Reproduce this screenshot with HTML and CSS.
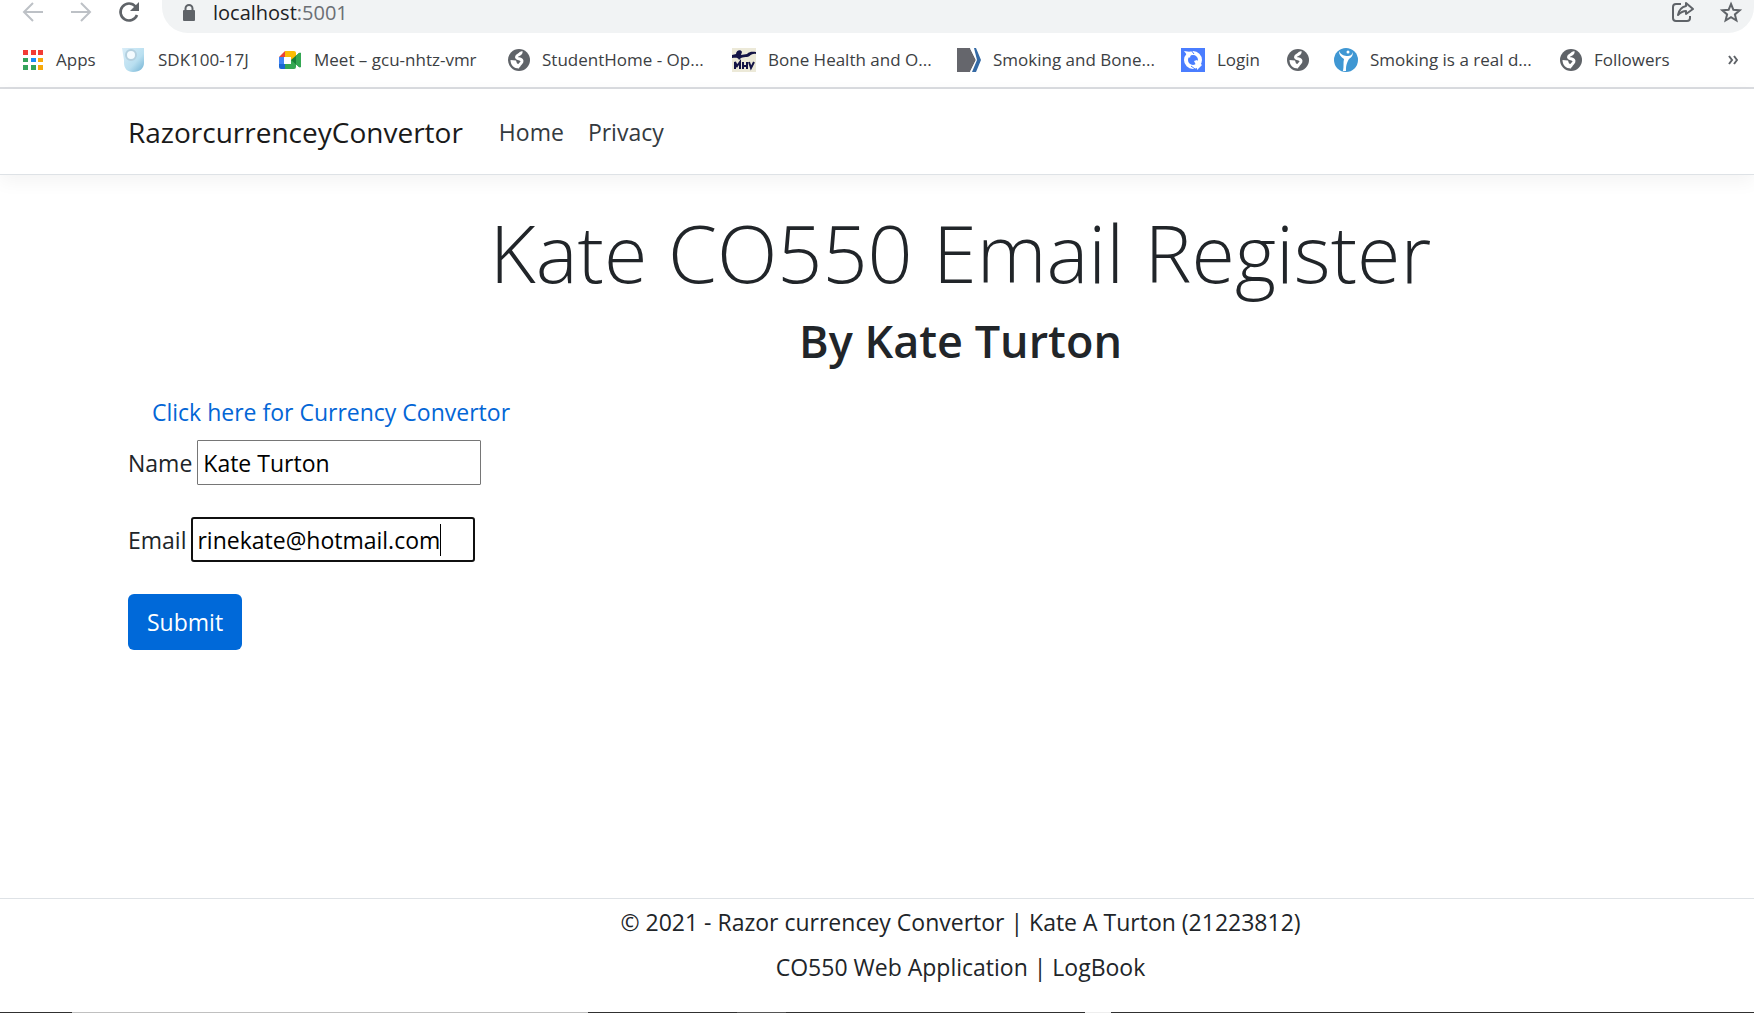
FILE: index.html
```html
<!DOCTYPE html>
<html lang="en">
<head>
<meta charset="utf-8">
<title>RazorcurrenceyConvertor</title>
<link rel="stylesheet" href="styles.css">
</head>
<body>
<svg class="symbols" aria-hidden="true">
  <symbol id="globe" viewBox="0 0 22 22">
    <circle cx="11" cy="11" r="11" fill="#5f6368"/>
    <path d="M13 2.500C14 6 8.500 5 8.500 8C8.500 10.500 13.500 9 14 12C14.300 14.500 11 14.500 10.500 18" fill="none" stroke="#fff" stroke-width="3"/>
    <path d="M2.500 11l5.500.5 1 3 3 1-1 4C6 19.500 2.500 16 2.500 11z" fill="#fff"/>
  </symbol>
</svg>

<div class="browser">
  <div class="toolbar">
    <nav class="controls">
      <button type="button" aria-label="Back"><svg width="24" height="24" viewBox="0 0 24 24" fill="none" stroke="#bdc1c6" stroke-width="2"><path d="M22 12H4M12 3l-9 9 9 9"/></svg></button>
      <button type="button" aria-label="Forward"><svg width="24" height="24" viewBox="0 0 24 24" fill="none" stroke="#bdc1c6" stroke-width="2"><path d="M2 12h18M12 3l9 9-9 9"/></svg></button>
      <button type="button" aria-label="Reload"><svg width="24" height="24" viewBox="0 0 24 24"><path d="M18.500 6.500A8.500 8.500 0 1 0 20 15" fill="none" stroke="#5f6368" stroke-width="2.600"/><path d="M22 2v9h-9z" fill="#5f6368"/></svg></button>
    </nav>
    <div class="omnibox">
      <svg class="lock" width="14" height="18" viewBox="0 0 14 18"><path d="M3.500 7V4.500a3.500 3.500 0 0 1 7 0V7" fill="none" stroke="#5f6368" stroke-width="2"/><rect x="1" y="6" width="12" height="11" rx="1" fill="#5f6368"/></svg>
      <span class="url">localhost<span class="port">:5001</span></span>
      <button type="button" aria-label="Share"><svg width="24" height="24" viewBox="0 0 24 24" fill="none" stroke="#5f6368" stroke-width="2" stroke-linejoin="round"><path d="M10 4H5a3 3 0 0 0-3 3v11a3 3 0 0 0 3 3h11a3 3 0 0 0 3-3v-2"/><path d="M15 3l7 6-7 5v-3c-3 0-5 1-8 4 1-6 4-8 8-9z"/></svg></button>
      <button type="button" aria-label="Bookmark this page"><svg width="24" height="24" viewBox="0 0 24 24" fill="none" stroke="#5f6368" stroke-width="2"><path d="M12 4l2.400 5.800 6.300.5-4.800 4.100 1.500 6.100L12 17.200l-5.400 3.300 1.500-6.100-4.800-4.100 6.300-.5z"/></svg></button>
    </div>
  </div>

  <nav class="bookmarks" aria-label="Bookmarks">
    <a href="#"><svg width="22" height="22" viewBox="0 0 22 22"><path d="M1 1h5v5H1zM9 1h5v5H9zM16 1h5v5h-5z" fill="#f23c35"/><path d="M1 9h5v4H1zM1 16h5v5H1zM9 16h5v5H9z" fill="#34a35a"/><path d="M9 9h5v4H9z" fill="#1a8cf5"/><path d="M16 9h5v4h-5zM16 16h5v5h-5z" fill="#f7a90a"/></svg>Apps</a>
    <a href="#"><svg width="24" height="24" viewBox="0 0 24 24"><defs><linearGradient id="ice" x2="1" y2="1"><stop stop-color="#d9edf8"/><stop offset=".6" stop-color="#b9dff0"/><stop offset="1" stop-color="#6fb0d2"/></linearGradient></defs><path d="M0 0h22v15c0 5-4 9-11 9-6 0-9-4-9-9V12z" fill="url(#ice)"/><circle cx="9" cy="7" r="5" fill="#f4fbff" stroke="#b4d0df" stroke-width="2"/></svg>SDK100-17J</a>
    <a href="#"><svg width="24" height="24" viewBox="0 0 24 24"><path d="M1 9l6-6v6z" fill="#ea4335"/><path d="M7 3h9q2 0 2 2v4l-5 3V9H7z" fill="#fbbc04"/><path d="M1 9h5v7H1z" fill="#4285f4"/><path d="M1 16h6v5H3q-2 0-2-2z" fill="#1967d2"/><path d="M7 16h6v-4l5-3v10q0 2-2 2H7z" fill="#34a853"/><path d="M13 12l8-7q2-1 2 1v12q0 2-2 1z" fill="#188038"/><path d="M18 8l3-3q2-1 2 1v12q0 2-2 1l-3-3z" fill="#34a853"/></svg>Meet – gcu-nhtz-vmr</a>
    <a href="#"><svg width="22" height="22"><use href="#globe"/></svg>StudentHome - Op...</a>
    <a href="#"><svg width="24" height="24" viewBox="0 0 24 24"><path d="M0 0h24v24H0z" fill="#ece9d8"/><path d="M0 7l4-1c0-4 5-5 6-2l-1 3 6-1c3-3 6-2 9-2v2c-5-1-6 3-9 3-2 0-4 0-6 1l-2 2c-1-3-4-2-7-2z" fill="#141446"/><path d="M3 21v-7l2 4 3-4v7M11 14v7M15 14v7M11 18h4M17 14l2 6 3-6" fill="none" stroke="#141446" stroke-width="2"/></svg>Bone Health and O...</a>
    <a href="#"><svg width="24" height="24" viewBox="0 0 24 24"><path d="M0 0h13l6 12-6 12H0z" fill="#65666c"/><path d="M14 0l6 12-6 12" fill="none" stroke="#fff" stroke-width="2"/><path d="M17 0h2l5 12-5 12h-4l5-12z" fill="#356aa4"/></svg>Smoking and Bone...</a>
    <a href="#"><svg width="24" height="24" viewBox="0 0 24 24"><path d="M0 0h24v24H0z" fill="#4a7dff"/><circle cx="12" cy="12" r="7" fill="none" stroke="#fff" stroke-width="4"/><path d="M13 13l3-1 5 5-5 5v-3z" fill="#fff"/><path d="M3 3l7 1-1 6-3-3z" fill="#fff"/><path d="M10 2l3 4M10 18l4 3" stroke="#4a7dff"/></svg>Login</a>
    <a href="#" aria-label="Website"><svg width="22" height="22"><use href="#globe"/></svg></a>
    <a href="#"><svg width="24" height="24" viewBox="0 0 24 24"><circle cx="12" cy="12" r="12" fill="#3f97d3"/><circle cx="14" cy="4" r="1.500" fill="#fff"/><path d="M5 3c0 4 2 6 5 8-1 4 0 7-1 12h3c0-4 0-7 3-12 3-2 4-4 4-7-1 3-3 4-5 4-4 0-7-1-9-5z" fill="#fff"/></svg>Smoking is a real d...</a>
    <a href="#"><svg width="22" height="22"><use href="#globe"/></svg>Followers</a>
    <button type="button" aria-label="More bookmarks"><svg width="10" height="10" viewBox="0 0 10 10" fill="none" stroke="#5f6368" stroke-width="2"><path d="M1 1l3 4-3 4M6 1l3 4-3 4"/></svg></button>
  </nav>
</div>

<header class="site-header">
  <nav class="container site-nav">
    <a class="brand" href="#">RazorcurrenceyConvertor</a>
    <a class="nav-link" href="#">Home</a>
    <a class="nav-link" href="#">Privacy</a>
  </nav>
</header>

<main class="container">
  <h1 class="title">Kate CO550 Email Register</h1>
  <h2 class="subtitle">By Kate Turton</h2>
  <a class="convertor-link" href="#">Click here for Currency Convertor</a>
  <form>
    <div class="field">
      <label for="name">Name</label>
      <input id="name" type="text" value="Kate Turton">
    </div>
    <div class="field">
      <label for="email">Email</label>
      <span class="active-input"><input id="email" type="text" value="rinekate@hotmail.com"><span class="caret"></span></span>
    </div>
    <button class="submit" type="submit">Submit</button>
  </form>
</main>

<footer class="site-footer">
  <div class="container">
    <p>© 2021 - Razor currencey Convertor | Kate A Turton (21223812)</p>
    <p>CO550 Web Application | LogBook</p>
  </div>
</footer>
<div class="taskbar-edge"></div>
</body>
</html>
```
FILE: styles.css
```css
* {
  box-sizing: border-box;
}

body {
  margin: 0;
  min-height: 100vh;
  display: flex;
  flex-direction: column;
  overflow-x: hidden;
  background: #fff;
  color: #212529;
  font-family: "Open Sans", "Noto Sans", sans-serif;
  font-size: 23px;
  line-height: 36px;
}

a {
  color: inherit;
  text-decoration: none;
}

button {
  border: 0;
  padding: 0;
  background: none;
  font: inherit;
}

svg {
  display: block;
  flex: none;
}

.symbols {
  position: absolute;
  width: 0;
  height: 0;
}

/* Browser chrome */
.browser {
  border-bottom: 2px solid #dadce0;
}

.toolbar {
  display: flex;
  height: 33px;
}

.controls {
  display: flex;
  gap: 24px;
  padding-left: 21px;
  width: 162px;
}

.controls button,
.omnibox button {
  height: 24px;
}

.omnibox {
  flex: 1;
  display: flex;
  align-items: flex-start;
  gap: 24px;
  padding: 0 11px 0 20px;
  border-radius: 0 0 26px 26px;
  background: #f1f3f4;
}

.lock {
  margin-top: 4px;
}

.url {
  flex: 1;
  margin-left: -7px;
  color: #202124;
  font-size: 20px;
  line-height: 26px;
}

.port {
  color: #6b6f74;
}

.bookmarks {
  display: grid;
  grid-template-columns: 100px 156px 230px 224px 225px 224px 106px 47px 226px 1fr auto;
  align-items: center;
  height: 54px;
  padding: 0 16px 0 22px;
  color: #3c4043;
  font-size: 17px;
  line-height: 24px;
}

.bookmarks a {
  display: flex;
  align-items: center;
  gap: 12px;
  white-space: nowrap;
}

/* Page */
.container {
  margin: 0 -39px 0 128px;
}

.site-header {
  border-bottom: 1px solid #dee2e6;
  box-shadow: 0 6px 18px rgba(0, 0, 0, 0.05);
}

.site-nav {
  display: flex;
  align-items: center;
  gap: 24px;
  height: 85px;
}

.brand {
  margin-right: 12px;
  color: #1a1a1a;
  font-size: 28px;
}

.nav-link {
  color: #343a40;
}

main {
  flex: 1;
  padding-top: 28px;
}

.title {
  margin: 0 0 9px;
  text-align: center;
  font-size: 79px;
  font-weight: 300;
  line-height: 100px;
}

.subtitle {
  margin: 0 0 24px;
  text-align: center;
  font-size: 45px;
  font-weight: 600;
  line-height: 58px;
}

.convertor-link {
  display: inline-block;
  padding-left: 24px;
  margin-bottom: 10px;
  color: #0366d6;
}

.field {
  display: flex;
  align-items: center;
  gap: 5px;
  margin-bottom: 32px;
}

.field input {
  display: block;
  width: 284px;
  height: 45px;
  padding: 2px 5px;
  border: 1px solid #767676;
  border-radius: 1px;
  background: #fff;
  color: #000;
  font: inherit;
}

.active-input {
  position: relative;
}

.field .active-input input {
  padding: 1px 4px;
  border: 2px solid #101010;
  border-radius: 3px;
}

.caret {
  position: absolute;
  top: 7px;
  left: 249px;
  width: 1px;
  height: 32px;
  background: #000;
}

.submit {
  padding: 10px 19px;
  border-radius: 6px;
  background: #0069d9;
  color: #fff;
}

.site-footer {
  height: 114px;
  border-top: 1px solid #dee2e6;
  padding-top: 5px;
  text-align: center;
}

.site-footer p {
  margin: 0 0 9px;
}

.taskbar-edge {
  height: 1px;
  background: linear-gradient(90deg, #303030 72px, #c0c0c0 72px 588px, #303030 588px 737px, #555 737px 786px, #303030 786px 1085px, #eee 1085px 1111px, #303030 1111px);
}
```
